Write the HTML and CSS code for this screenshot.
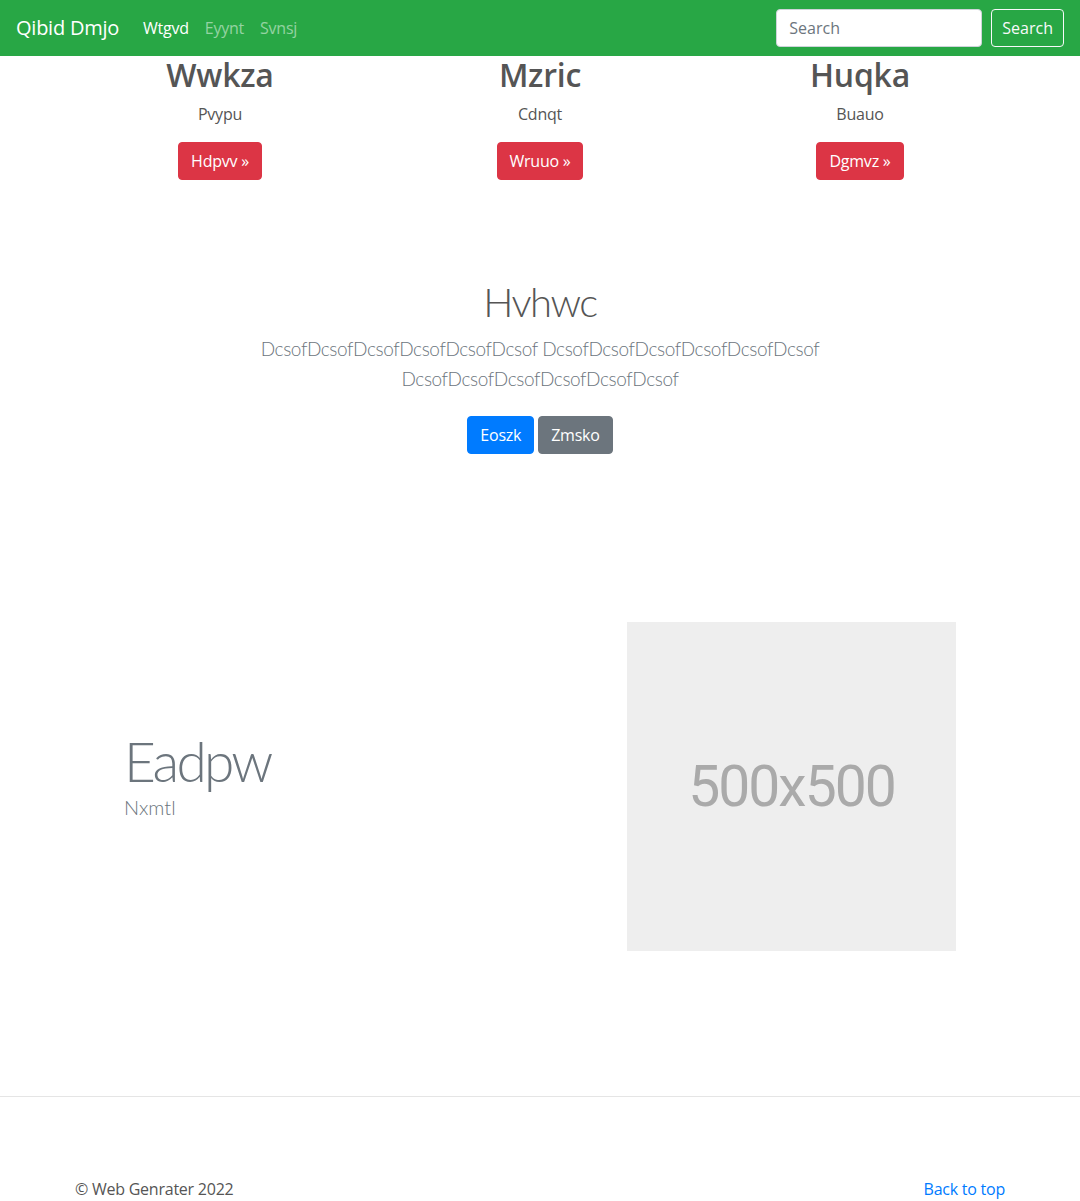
FILE: index.html
```html
<!DOCTYPE html>
<html lang="en">
<head>
<meta charset="utf-8">
<title>Qibid Dmjo</title>
<link rel="stylesheet" href="styles.css">
</head>
<body>
<nav class="navbar">
  <a class="brand" href="#">Qibid Dmjo</a>
  <ul class="nav">
    <li><a class="nav-link active" href="#">Wtgvd</a></li>
    <li><a class="nav-link" href="#">Eyynt</a></li>
    <li><a class="nav-link" href="#">Svnsj</a></li>
  </ul>
  <form class="search">
    <input class="search-input" type="text" placeholder="Search">
    <button class="btn btn-outline-light" type="button">Search</button>
  </form>
</nav>

<main>
  <div class="container cols">
    <div class="col">
      <h2 class="col-title">Wwkza</h2>
      <p class="col-text">Pvypu</p>
      <a class="btn btn-danger" href="#">Hdpvv &raquo;</a>
    </div>
    <div class="col">
      <h2 class="col-title">Mzric</h2>
      <p class="col-text">Cdnqt</p>
      <a class="btn btn-danger" href="#">Wruuo &raquo;</a>
    </div>
    <div class="col">
      <h2 class="col-title">Huqka</h2>
      <p class="col-text">Buauo</p>
      <a class="btn btn-danger" href="#">Dgmvz &raquo;</a>
    </div>
  </div>

  <section class="hero">
    <h1 class="hero-title">Hvhwc</h1>
    <p class="lead hero-lead">DcsofDcsofDcsofDcsofDcsofDcsof DcsofDcsofDcsofDcsofDcsofDcsof DcsofDcsofDcsofDcsofDcsofDcsof</p>
    <div class="hero-actions">
      <a class="btn btn-primary" href="#">Eoszk</a>
      <a class="btn btn-secondary" href="#">Zmsko</a>
    </div>
  </section>

  <section class="container feature">
    <div class="feature-text">
      <h1 class="display">Eadpw</h1>
      <p class="lead muted">Nxmtl</p>
    </div>
    <div class="placeholder">500x500</div>
  </section>
</main>

<footer class="footer">
  <div class="container footer-row">
    <p class="copy">&copy; Web Genrater 2022</p>
    <a class="top-link" href="#">Back to top</a>
  </div>
</footer>
</body>
</html>
```

FILE: styles.css
```css
* { box-sizing: border-box; }

body {
  margin: 0;
  font-family: "Open Sans", "Noto Sans", "Liberation Sans", sans-serif;
  font-size: 16px;
  line-height: 1.5;
  letter-spacing: -0.015em;
  color: #555;
  background: #fff;
}

a { text-decoration: none; }

.navbar {
  display: flex;
  align-items: center;
  height: 56px;
  padding: 8px 16px;
  background: #28a745;
}

.brand {
  color: #fff;
  font-size: 20px;
  line-height: 30px;
  margin-right: 16px;
}

.nav {
  display: flex;
  list-style: none;
  margin: 0;
  padding: 0;
  flex: 1;
}

.nav-link {
  display: block;
  padding: 8px;
  color: rgba(255, 255, 255, 0.5);
}

.nav-link.active { color: #fff; }

.search {
  display: flex;
  align-items: center;
}

.search-input {
  width: 206px;
  height: 38px;
  margin-right: 9px;
  padding: 6px 12px;
  font: inherit;
  color: #495057;
  border: 1px solid #ced4da;
  border-radius: 4px;
  background: #fff;
}

.search-input::placeholder { color: #6c757d; }

.btn {
  display: inline-block;
  padding: 6px 12px;
  font: inherit;
  font-size: 16px;
  line-height: 24px;
  border: 1px solid transparent;
  border-radius: 4px;
  color: #fff;
  cursor: pointer;
}

.btn-outline-light {
  background: transparent;
  border-color: #f8f9fa;
  color: #f8f9fa;
  padding: 6px 10px;
}

.btn-danger { background: #dc3545; border-color: #dc3545; }
.btn-primary { background: #007bff; border-color: #007bff; }
.btn-secondary { background: #6c757d; border-color: #6c757d; }

.container {
  width: 960px;
  margin: 0 auto;
}

.cols {
  display: flex;
}

.col {
  flex: 1;
  text-align: center;
  padding: 0 15px;
}

.col-title {
  margin: 0 0 8px;
  font-size: 32px;
  line-height: 1.2;
  font-weight: 600;
}

.col-text { margin: 0 0 16px; }

.hero {
  text-align: center;
  padding-top: 98px;
}

.hero-title {
  margin: 0 0 8px;
  font-family: Lato, Roboto, sans-serif;
  font-size: 40px;
  line-height: 1.2;
  font-weight: 300;
  letter-spacing: -1.5px;
}

.lead {
  font-family: Lato, Roboto, sans-serif;
  font-size: 19px;
  font-weight: 300;
  line-height: 30px;
  letter-spacing: -0.4px;
}

.hero-lead {
  max-width: 640px;
  margin: 0 auto 22px;
  color: #6c757d;
}

.hero-actions {
  display: flex;
  justify-content: center;
  gap: 4px;
}

.feature {
  display: flex;
  align-items: center;
  padding: 168px 64px 0;
}

.feature-text { flex: 1; }

.display {
  margin: 0;
  font-family: Lato, Roboto, sans-serif;
  font-size: 55px;
  font-weight: 300;
  line-height: 1.2;
  letter-spacing: -2.8px;
  color: #6c757d;
}

.muted { color: #6c757d; margin: -2px 0 24px; letter-spacing: 0; font-size: 20px; }

.placeholder {
  width: 329px;
  height: 329px;
  background: #eee;
  color: #aaa;
  font-family: Roboto, Lato, sans-serif;
  font-size: 57px;
  letter-spacing: -2px;
  display: flex;
  align-items: center;
  justify-content: center;
}

.footer {
  margin-top: 145px;
  border-top: 1px solid #e5e5e5;
  padding-top: 80px;
}

.footer-row {
  display: flex;
  justify-content: space-between;
  padding: 0 15px;
}

.copy { margin: 0; }

.top-link { color: #007bff; }
```
